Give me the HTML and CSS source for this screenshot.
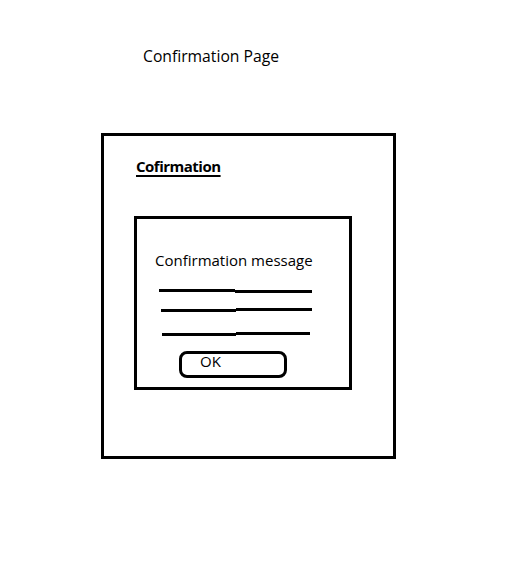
FILE: index.html
```html
<!DOCTYPE html>
<html lang="en">
<head>
<meta charset="utf-8">
<title>Confirmation Page</title>
<link rel="stylesheet" href="styles.css">
</head>
<body>
<div class="page">
  <div class="page-title">Confirmation Page</div>
  <div class="outer-box">
    <div class="box-heading"><span class="underlined">Cofirmation</span></div>
    <div class="dialog">
      <div class="message">Confirmation message</div>
      <div class="line line-1"><span class="seg seg-a"></span><span class="seg seg-b"></span></div>
      <div class="line line-2"><span class="seg seg-a"></span><span class="seg seg-b"></span></div>
      <div class="line line-3"><span class="seg seg-a"></span><span class="seg seg-b"></span></div>
      <div class="ok-button">OK</div>
    </div>
  </div>
</div>
</body>
</html>
```
FILE: styles.css
```css
html, body {
  margin: 0;
  padding: 0;
  background: #ffffff;
}

body {
  font-family: "Open Sans", "Noto Sans", sans-serif;
  color: #000000;
  width: 522px;
  height: 570px;
  overflow: hidden;
}

.page {
  display: flex;
  flex-direction: column;
  align-items: flex-start;
  padding-top: 46px;
}

.page-title {
  font-size: 15.7px;
  line-height: 20px;
  margin-left: 143px;
}

.outer-box {
  box-sizing: border-box;
  margin-top: 67px;
  margin-left: 101px;
  width: 295px;
  height: 326px;
  border: 3px solid #000;
  padding: 20px 0 0 32px;
  display: flex;
  flex-direction: column;
  align-items: flex-start;
}

.box-heading {
  font-size: 15px;
  font-weight: 700;
  line-height: 20px;
  letter-spacing: -0.5px;
}

.underlined {
  text-decoration: underline;
  text-decoration-thickness: 2px;
  text-underline-offset: 3px;
}

.dialog {
  box-sizing: border-box;
  margin-top: 40px;
  margin-left: -2px;
  width: 218px;
  height: 174px;
  border: 3px solid #000;
  padding: 31px 0 0 18px;
  display: flex;
  flex-direction: column;
  align-items: flex-start;
}

.message {
  font-size: 15px;
  line-height: 20px;
}

.line {
  display: flex;
  align-items: flex-start;
}

.seg {
  display: block;
  height: 3px;
  background: #000;
}

.line-1 {
  margin-top: 19px;
  margin-left: 4px;
}
.line-1 .seg-a { width: 76px; }
.line-1 .seg-b { width: 77px; margin-top: 1px; }

.line-2 {
  margin-top: 15px;
  margin-left: 6px;
}
.line-2 .seg-a { width: 75px; margin-top: 1px; }
.line-2 .seg-b { width: 76px; }

.line-3 {
  margin-top: 20px;
  margin-left: 7px;
}
.line-3 .seg-a { width: 74px; margin-top: 1px; }
.line-3 .seg-b { width: 74px; }

.ok-button {
  box-sizing: border-box;
  margin-top: 15px;
  margin-left: 24px;
  width: 108px;
  height: 27px;
  border: 3px solid #000;
  border-radius: 8px;
  padding-left: 18px;
  padding-top: 1px;
  font-size: 15px;
  line-height: 13px;
}
```
